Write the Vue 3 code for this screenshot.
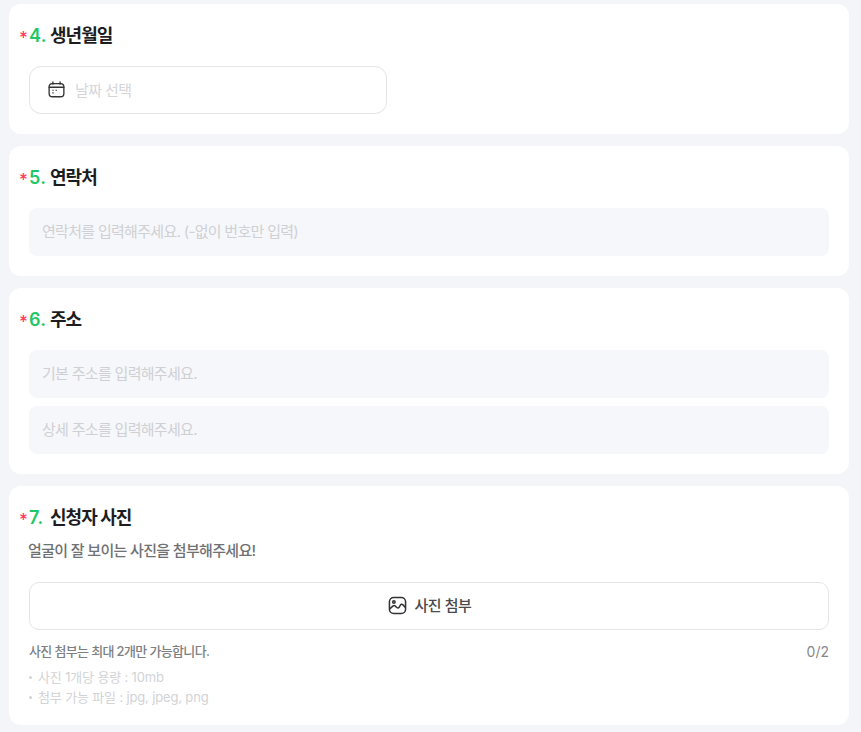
<template>
  <div class="page">
    <section class="card">
      <h2 class="title"><span class="star">*</span><span class="num">4.</span>생년월일</h2>
      <div class="date-field">
        <svg class="icon" width="17" height="17" viewBox="0 0 18 18" fill="none" stroke="#333" stroke-width="1.4">
          <rect x="1.2" y="2.7" width="15.6" height="14" rx="3.4" />
          <path d="M1.2 6.6H16.8M5.2 1V3.4M12.8 1V3.4" stroke-linecap="round" />
          <path d="M4.6 9.8H6M8 9.8H9.4M4.6 12.6H6" stroke-width="1.3" />
        </svg>
        <span class="date-text">날짜 선택</span>
      </div>
    </section>

    <section class="card">
      <h2 class="title"><span class="star">*</span><span class="num">5.</span>연락처</h2>
      <div class="fields">
        <div class="field">연락처를 입력해주세요. (-없이 번호만 입력)</div>
      </div>
    </section>

    <section class="card">
      <h2 class="title"><span class="star">*</span><span class="num">6.</span>주소</h2>
      <div class="fields">
        <div v-for="text in addressFields" :key="text" class="field">{{ text }}</div>
      </div>
    </section>

    <section class="card photo">
      <h2 class="title"><span class="star">*</span><span class="num">7.</span>신청자 사진</h2>
      <p class="desc">얼굴이 잘 보이는 사진을 첨부해주세요!</p>
      <div class="attach">
        <svg class="attach-icon" width="19" height="19" viewBox="0 0 20 20" fill="none" stroke="#333" stroke-width="1.6">
          <rect x="1.5" y="1.5" width="17" height="17" rx="4.5" />
          <circle cx="6.2" cy="6.4" r="1.3" />
          <path d="M1.8 13.6L5.4 10.4C6 9.9 6.8 9.9 7.4 10.4L9.6 12.4C10.2 12.9 11 12.8 11.5 12.2L13.2 9.4C13.8 8.5 14.8 8.4 15.5 9.1L18.3 12" stroke-linejoin="round" />
        </svg>
        <span class="attach-text">사진 첨부</span>
      </div>
      <div class="limit-row">
        <span class="limit-text">사진 첨부는 최대 2개만 가능합니다.</span>
        <span class="count">0/2</span>
      </div>
      <ul class="notes">
        <li v-for="note in notes" :key="note">{{ note }}</li>
      </ul>
    </section>
  </div>
</template>

<script setup>
const addressFields = ["기본 주소를 입력해주세요.", "상세 주소를 입력해주세요."];
const notes = ["사진 1개당 용량 : 10mb", "첨부 가능 파일 : jpg, jpeg, png"];
</script>

<style>
html,
body {
  background: #f4f5f9;
}
</style>

<style scoped>
.page {
  height: 732px;
  overflow: hidden;
  box-sizing: border-box;
  padding: 4px 12px 0 9px;
  display: flex;
  flex-direction: column;
  gap: 12px;
  font-family: "Inter", "Noto Sans CJK KR", sans-serif;
}

.card {
  background: #fff;
  border-radius: 12px;
  padding: 20px 20px 20px 10px;
}

.title {
  margin: 0;
  height: 22px;
  box-sizing: border-box;
  padding-bottom: 2px;
  display: flex;
  align-items: center;
  font-size: 18px;
  font-weight: 700;
  letter-spacing: -0.95px;
  color: #1d1d1f;
}

.star {
  width: 10px;
  color: #ff3b5c;
  font-size: 17px;
  font-weight: 500;
  line-height: 22px;
  padding-top: 7px;
  letter-spacing: 0;
}

.num {
  width: 21px;
  padding-top: 2px;
  color: #1fc865;
  font-size: 18px;
  font-weight: 600;
  letter-spacing: 0.3px;
}

.date-field {
  margin: 20px 0 0 10px;
  width: 358px;
  height: 48px;
  box-sizing: border-box;
  border: 1px solid #e3e4e8;
  border-radius: 12px;
  padding: 0 0 2px 18px;
  display: flex;
  align-items: center;
  gap: 10px;
}

.date-text {
  font-size: 15px;
  color: #d4d5d9;
  letter-spacing: -0.6px;
}

.fields {
  margin: 20px 0 0 10px;
  display: flex;
  flex-direction: column;
  gap: 8px;
}

.field {
  height: 48px;
  box-sizing: border-box;
  background: #f6f7fa;
  border-radius: 8px;
  padding: 0 0 4px 13px;
  display: flex;
  align-items: center;
  font-size: 15px;
  letter-spacing: -0.7px;
  color: #cfd0d4;
}

.photo {
  padding-bottom: 18px;
}

.desc {
  margin: 13px 0 0 9px;
  height: 20px;
  line-height: 20px;
  font-size: 15px;
  font-weight: 500;
  letter-spacing: -0.66px;
  color: #707174;
}

.attach {
  margin: 21px 0 0 10px;
  height: 48px;
  box-sizing: border-box;
  border: 1px solid #e3e4e8;
  border-radius: 10px;
  padding-bottom: 1px;
  display: flex;
  align-items: center;
  justify-content: center;
  gap: 8px;
  font-size: 15px;
  font-weight: 500;
  letter-spacing: -0.45px;
  color: #4a4a4c;
}

.attach-icon {
  margin-left: 1px;
}

.attach-text {
  padding-bottom: 2px;
}

.limit-row {
  margin: 11px 0 0 10px;
  display: flex;
  justify-content: space-between;
  align-items: center;
  height: 20px;
  font-size: 13px;
  font-weight: 500;
  letter-spacing: -0.65px;
  color: #7e7f82;
}

.limit-text {
  padding-bottom: 2px;
}

.count {
  font-size: 14px;
  font-weight: 400;
  letter-spacing: 0;
  color: #86878a;
}

.notes {
  margin: 6px 0 0 10px;
  padding: 0;
  list-style: none;
  font-size: 13px;
  line-height: 20px;
  letter-spacing: -0.15px;
  color: #d2d3d6;
}

.notes li {
  position: relative;
  padding-left: 9px;
}

.notes li::before {
  content: "";
  position: absolute;
  left: 0;
  top: 9px;
  width: 3px;
  height: 3px;
  border-radius: 50%;
  background: #d2d3d6;
}
</style>
